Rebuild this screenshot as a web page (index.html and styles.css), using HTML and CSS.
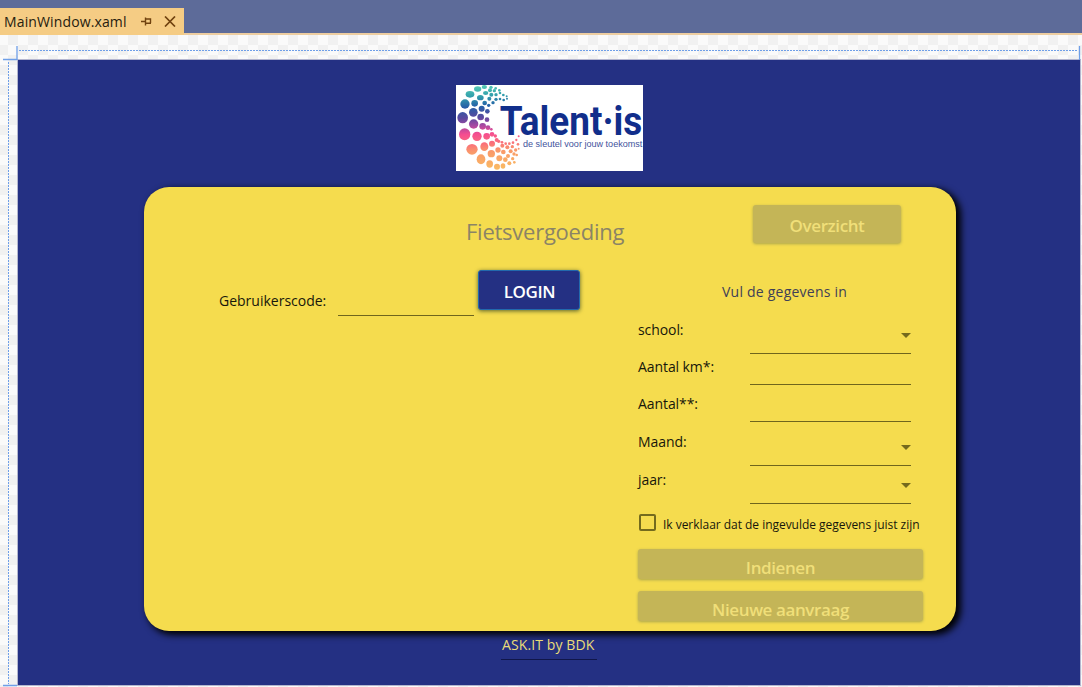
FILE: index.html
```
<!DOCTYPE html>
<html lang="nl">
<head>
<meta charset="utf-8">
<title>MainWindow.xaml</title>
<link rel="stylesheet" href="styles.css">
</head>
<body>
<header class="tabbar">
  <div class="tab">
    <span class="tab-name">MainWindow.xaml</span>
    <svg class="pin" width="12" height="9" viewBox="0 0 12 9"><path d="M0 4.5H4M4.5 0.5V8.5M4.5 2H9.5V6M4.5 6.2H10" fill="none" stroke="#70420f" stroke-width="1.4"/></svg>
    <svg class="close" width="12" height="11" viewBox="0 0 12 11"><path d="M1 .5L11 10.5M11 .5L1 10.5" stroke="#70420f" stroke-width="1.7"/></svg>
  </div>
</header>
<main class="designer">
  <svg class="guides" width="1082" height="652" viewBox="0 35 1082 652" fill="none" stroke="#6f9fe8">
    <path d="M19 50.5H1078M8.500 62V684" stroke-dasharray="2 1"/>
    <path d="M17 46V60M3 59.500H17M1079.500 46V60M3 685.500H17" stroke-width="1.300"/>
  </svg>
  <section class="window">
    <svg class="logo" width="187" height="86" viewBox="6 9 561 258">
      <defs><linearGradient id="spectrum" gradientUnits="userSpaceOnUse" x1="60" y1="10" x2="75" y2="265">
        <stop offset="0" stop-color="#58cdb5"/><stop offset=".13" stop-color="#329fac"/><stop offset=".25" stop-color="#245fa7"/><stop offset=".38" stop-color="#5b499f"/><stop offset=".47" stop-color="#a548a2"/><stop offset=".57" stop-color="#f54d90"/><stop offset=".68" stop-color="#fa6c7c"/><stop offset=".78" stop-color="#f9986a"/><stop offset="1" stop-color="#fabb63"/>
      </linearGradient></defs>
      <g fill="url(#spectrum)">
        <ellipse cx="26" cy="107" rx="16" ry="17"/><circle cx="33" cy="66" r="14"/><ellipse cx="48" cy="37" rx="13" ry="10"/><ellipse cx="71" cy="21" rx="11" ry="8"/><ellipse cx="91" cy="15" rx="8" ry="6"/>
        <ellipse cx="32" cy="157" rx="17" ry="18"/><ellipse cx="54" cy="202" rx="17" ry="16"/><ellipse cx="81" cy="232" rx="13" ry="15"/><ellipse cx="107" cy="246" rx="10" ry="11"/><ellipse cx="129" cy="254" rx="9" ry="9"/><ellipse cx="147" cy="252" rx="7" ry="8"/>
        <circle cx="58" cy="91" r="13"/><circle cx="59" cy="126" r="14"/><circle cx="69" cy="163" r="14"/><ellipse cx="91" cy="194" rx="12" ry="13"/><circle cx="112" cy="215" r="11"/><circle cx="136" cy="229" r="9"/><circle cx="154" cy="233" r="7"/><circle cx="166" cy="244" r="6"/>
        <circle cx="62" cy="64" r="10"/><ellipse cx="79" cy="47" rx="10" ry="8"/><ellipse cx="95" cy="33" rx="8" ry="6"/><circle cx="108" cy="25" r="6"/><circle cx="111" cy="16" r="5"/><circle cx="121" cy="26" r="5"/><circle cx="125" cy="19" r="4"/>
        <circle cx="83" cy="80" r="9"/><circle cx="80" cy="105" r="10"/><circle cx="86" cy="133" r="10"/><circle cx="98" cy="163" r="10"/><circle cx="114" cy="185" r="9"/><circle cx="132" cy="204" r="8"/><circle cx="148" cy="210" r="7"/><circle cx="162" cy="222" r="6"/><circle cx="176" cy="230" r="5"/><circle cx="188" cy="219" r="4"/><circle cx="181" cy="241" r="4"/>
        <circle cx="92" cy="63" r="7"/><circle cx="106" cy="50" r="6"/><circle cx="112" cy="38" r="6"/><circle cx="126" cy="38" r="5"/><circle cx="138" cy="33" r="4"/><circle cx="148" cy="39" r="4"/><circle cx="136" cy="25" r="4"/><circle cx="158" cy="43" r="3"/>
        <circle cx="100" cy="88" r="7"/><circle cx="99" cy="113" r="7"/><circle cx="102" cy="137" r="7"/><circle cx="114" cy="157" r="7"/><circle cx="128" cy="174" r="6"/><circle cx="145" cy="191" r="6"/><circle cx="160" cy="196" r="6"/><circle cx="170" cy="208" r="6"/><circle cx="180" cy="216" r="5"/><circle cx="175" cy="194" r="5"/><circle cx="185" cy="204" r="5"/>
        <circle cx="104" cy="70" r="5"/><circle cx="117" cy="62" r="5"/><circle cx="126" cy="52" r="5"/><circle cx="138" cy="51" r="4"/><circle cx="149" cy="54" r="4"/><circle cx="159" cy="50" r="3"/><circle cx="112" cy="142" r="4"/><circle cx="124" cy="162" r="5"/><circle cx="134" cy="178" r="5"/><circle cx="144" cy="181" r="4"/><circle cx="155" cy="185" r="4"/><circle cx="166" cy="185" r="4"/><circle cx="177" cy="182" r="4"/><circle cx="187" cy="174" r="3.500"/><circle cx="194" cy="163" r="3"/><circle cx="192" cy="187" r="4"/><circle cx="194" cy="200" r="3"/>
      </g>
      <g fill="#112e8b">
        <text class="logo-name" x="137" y="159" textLength="428" lengthAdjust="spacingAndGlyphs">Talent·is</text>
        <text class="logo-slogan" x="207" y="194" textLength="358" lengthAdjust="spacingAndGlyphs">de sleutel voor jouw toekomst</text>
      </g>
    </svg>
    <div class="card">
      <div class="login">
        <h1 class="title">Fietsvergoeding</h1>
        <div class="login-row">
          <label class="code-label">Gebruikerscode:</label>
          <span class="code-field"></span>
          <button class="btn btn-login">LOGIN</button>
        </div>
      </div>
      <div class="details">
        <button class="btn btn-off btn-overview">Overzicht</button>
        <h2 class="subtitle">Vul de gegevens in</h2>
        <div class="row school"><span class="name">school:</span><span class="field"><i class="arrow"></i></span></div>
        <div class="row km"><span class="name">Aantal km*:</span><span class="field"></span></div>
        <div class="row count"><span class="name">Aantal**:</span><span class="field"></span></div>
        <div class="row month"><span class="name">Maand:</span><span class="field"><i class="arrow"></i></span></div>
        <div class="row year"><span class="name">jaar:</span><span class="field"><i class="arrow"></i></span></div>
        <label class="confirm"><span class="box"></span><span class="confirm-text">Ik verklaar dat de ingevulde gegevens juist zijn</span></label>
        <button class="btn btn-off btn-wide"><span class="clip">Indienen</span></button>
        <button class="btn btn-off btn-wide"><span class="clip">Nieuwe aanvraag</span></button>
      </div>
    </div>
    <footer class="credit">ASK.IT by BDK</footer>
  </section>
</main>
</body>
</html>
```

FILE: styles.css
```
* { box-sizing: border-box; }
body {
  margin: 0;
  width: 1082px;
  height: 687px;
  overflow: hidden;
  font-family: "Open Sans", "Noto Sans", sans-serif;
  font-size: 14px;
  color: #17170b;
}
.tabbar {
  height: 35px;
  padding-top: 8px;
  background: #5d6b99;
  border-bottom: 2px solid #edcda0;
}
.tab {
  display: flex;
  align-items: center;
  width: 184px;
  height: 27px;
  padding-left: 4px;
  background: #f5cc84;
  color: #26200f;
}
.tab-name { width: 137px; letter-spacing: .13px; white-space: nowrap; }
.close { margin-left: 11px; }
.designer {
  position: relative;
  height: 652px;
  padding: 24px 0 0 17px;
  background: repeating-conic-gradient(#f1f1f1 0 25%, #fafafa 0 50%) -2px 0 / 20px 20px;
}
.guides { position: absolute; left: 0; top: 0; }
.window {
  width: 1064px;
  height: 627px;
  border: 1px solid #b4b6cf;
  background: #243083;
  display: flex;
  flex-direction: column;
  align-items: flex-start;
}
.logo { display: block; margin: 25px 0 0 438px; background: #fff; flex: none; }
.logo-name { font: 700 122px Roboto, sans-serif; }
.logo-slogan { font: 27px "Liberation Sans", sans-serif; fill: #43539c; }
.card {
  display: grid;
  grid-template-columns: 494px 285px;
  flex: none;
  width: 812px;
  height: 444px;
  margin: 16px 0 0 126px;
  border-radius: 25px;
  background: #f5dc4e;
  box-shadow: 4px 3px 7px 1px #000;
}
.title {
  margin: 28px 0 0 322px;
  font-size: 22px;
  line-height: 32px;
  font-weight: 400;
  letter-spacing: -.25px;
  color: #8b8466;
}
.login-row { display: flex; margin: 23px 0 0 75px; height: 48px; }
.code-label { width: 119px; padding-top: 21px; line-height: 20px; }
.code-field { width: 136px; height: 46px; border-bottom: 1px solid #6f651d; }
.btn {
  display: block;
  padding: 0;
  border: 0;
  border-radius: 3px;
  font: 600 17px/24px "Open Sans", sans-serif;
  text-align: center;
}
.btn-login {
  width: 102px;
  height: 40px;
  margin-left: 4px;
  padding-top: 3px;
  padding-left: 1px;
  border: 1px solid #2369ad;
  background: #243083;
  color: #fff;
  letter-spacing: -.4px;
  box-shadow: 0 1px 4px #57602b;
}
.btn-off { background: #c4b557; color: #f0df79; letter-spacing: -.4px; box-shadow: 0 1px 3px #a9a44f; }
.btn-overview { width: 148px; height: 38px; margin: 18px 0 0 115px; padding-top: 3px; }
.subtitle {
  margin: 39px 0 15px 84px;
  font-size: 14px;
  line-height: 20px;
  font-weight: 400;
  letter-spacing: .23px;
  color: #3f4057;
}
.row { display: grid; grid-template-columns: 112px 161px; line-height: 20px; }
.school { height: 37px; padding-top: 3px; }
.km { height: 31px; padding-top: 3px; }
.count { height: 37px; padding-top: 9px; }
.month { height: 44px; padding-top: 10px; }
.year { height: 38px; padding-top: 4px; }
.name { letter-spacing: -.08px; }
.field { display: flex; justify-content: flex-end; border-bottom: 1px solid #6f651d; }
.arrow {
  width: 10px;
  height: 5px;
  margin-top: 13px;
  background: #756a1d;
  clip-path: polygon(0 0, 100% 0, 50% 100%);
}
.confirm { display: flex; align-items: center; height: 37px; padding-left: 1px; }
.box { width: 17px; height: 17px; margin-right: 7px; border: 2px solid #746b1d; border-radius: 2px; }
.confirm-text { font-size: 12px; letter-spacing: -.03px; white-space: nowrap; padding-top: 3px; }
.btn-wide { width: 285px; height: 30px; margin: 8px 0 12px; }
.btn-wide + .btn-wide { margin-top: 0; }
.clip { display: block; height: 27px; padding-top: 5px; overflow: hidden; }
.credit {
  width: 96px;
  height: 29px;
  margin: 0 0 0 483px;
  padding: 4px 0 0 1px;
  line-height: 20px;
  color: #eadc78;
  border-bottom: 1px solid #10164a;
  letter-spacing: .1px;
  white-space: nowrap;
}
```
